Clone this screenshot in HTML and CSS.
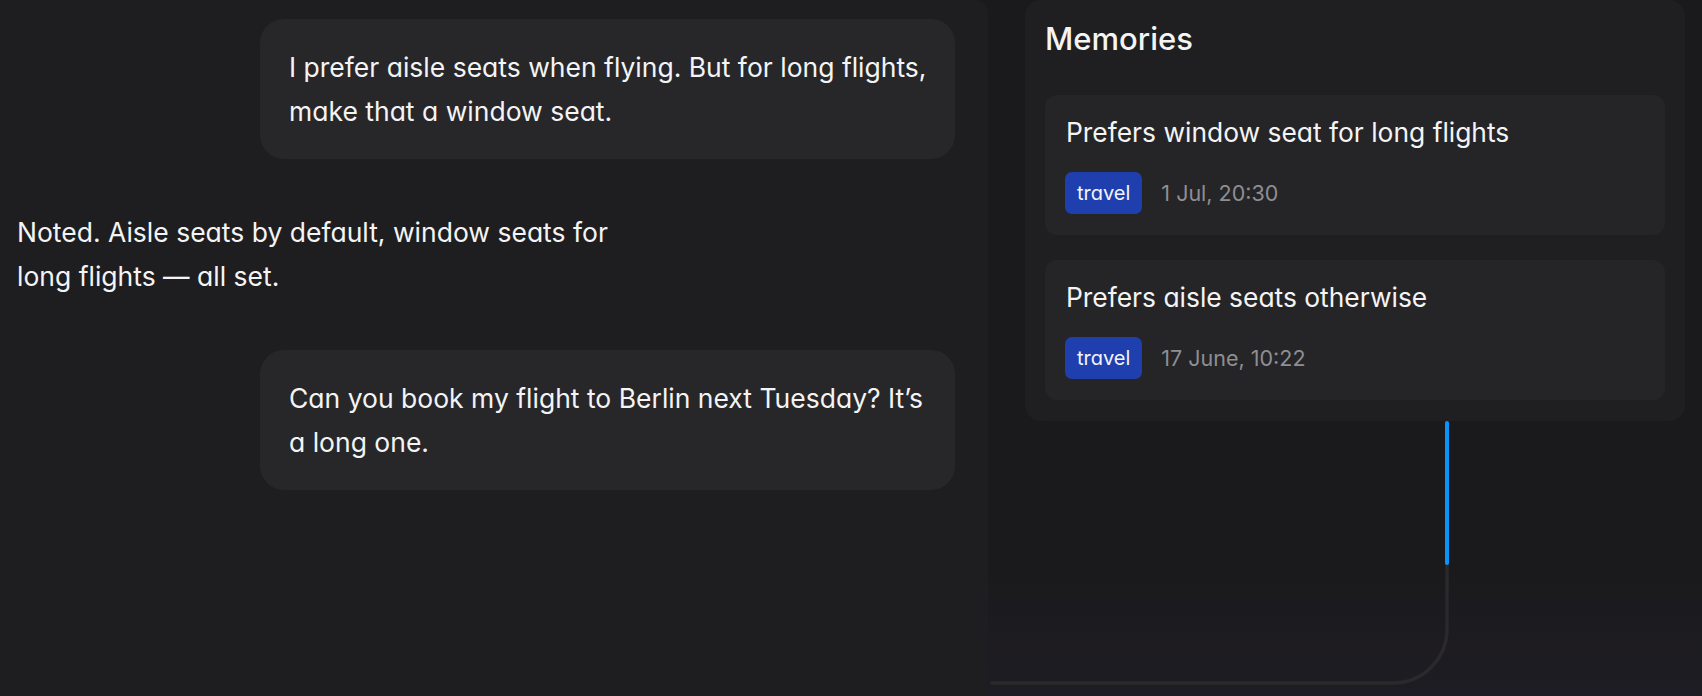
FILE: index.html
```html
<!DOCTYPE html>
<html lang="en">
<head>
<meta charset="utf-8">
<title>Chat with memories</title>
<link rel="stylesheet" href="styles.css">
</head>
<body>
<div class="app">
  <main class="chat">
    <div class="msg msg-user">I prefer aisle seats when flying. But for long flights, make that a window seat.</div>
    <div class="msg msg-ai">Noted. Aisle seats by default, window seats for long flights — all set.</div>
    <div class="msg msg-user">Can you book my flight to Berlin next Tuesday? It’s a long one.</div>
  </main>
  <aside class="side">
    <section class="panel">
      <h2 class="panel-title">Memories</h2>
      <div class="cards">
        <article class="card">
          <div class="card-title">Prefers window seat for long flights</div>
          <div class="meta"><span class="tag">travel</span><span class="date">1 Jul, 20:30</span></div>
        </article>
        <article class="card">
          <div class="card-title">Prefers aisle seats otherwise</div>
          <div class="meta"><span class="tag">travel</span><span class="date">17 June, 10:22</span></div>
        </article>
      </div>
    </section>
  </aside>
  <svg class="connector" width="1702" height="696" viewBox="0 0 1702 696" aria-hidden="true">
    <path d="M1447 564 L1447 629 A54 54 0 0 1 1393 683 L992 683" fill="none" stroke="#2a2a2d" stroke-width="3.5" stroke-linecap="round"/>
    <path d="M1447 423 L1447 563" fill="none" stroke="#0a93fb" stroke-width="4" stroke-linecap="round"/>
  </svg>
</div>
</body>
</html>
```
FILE: styles.css
```css
* { box-sizing: border-box; }
html, body {
  margin: 0;
  height: 100%;
}
body {
  background: #1a1a1c;
  font-family: "Inter", "Noto Sans", sans-serif;
  font-feature-settings: "cv11" 1;
  color: #f4f4f5;
  overflow: hidden;
}
.app {
  position: relative;
  display: flex;
  width: 1702px;
  height: 696px;
  background:
    linear-gradient(to bottom, rgba(0,0,0,0) 82%, rgba(40,34,52,0.35) 100%),
    #1a1a1c;
}
.chat {
  width: 988px;
  flex: none;
  background: #1e1e20;
  border-top-right-radius: 14px;
  padding: 19px 33px 0 17px;
  display: flex;
  flex-direction: column;
  gap: 52px;
}
.msg {
  font-size: 26.5px;
  line-height: 43.5px;
}
.msg-user {
  align-self: flex-end;
  width: 695px;
  background: #27272a;
  border-radius: 24px;
  padding: 27px 24px 26px 29px;
}
.msg-ai {
  max-width: 640px;
}
.side {
  flex: 1;
  padding: 0 17px 0 37px;
}
.panel {
  background: #1f1f21;
  border-radius: 16px;
  padding: 20px 20px 21px 20px;
}
.panel-title {
  margin: 0 0 37px 0;
  font-size: 31px;
  line-height: 38px;
  font-weight: 500;
  color: #f4f4f5;
}
.cards {
  display: flex;
  flex-direction: column;
  gap: 25px;
}
.card {
  background: #252527;
  border-radius: 12px;
  padding: 21px 20px 21px 20px;
}
.card-title {
  font-size: 26.4px;
  line-height: 32px;
  margin: 0 0 24px 1px;
  color: #f4f4f5;
}
.meta {
  display: flex;
  align-items: center;
  gap: 19px;
}
.tag {
  height: 42px;
  display: inline-flex;
  align-items: center;
  padding: 0 12px;
  background: #1f3fae;
  border-radius: 7px;
  font-size: 20px;
  color: #f4f4f8;
}
.date {
  font-size: 21.5px;
  color: #8e8e93;
}
.connector {
  position: absolute;
  left: 0;
  top: 0;
  pointer-events: none;
}
```
